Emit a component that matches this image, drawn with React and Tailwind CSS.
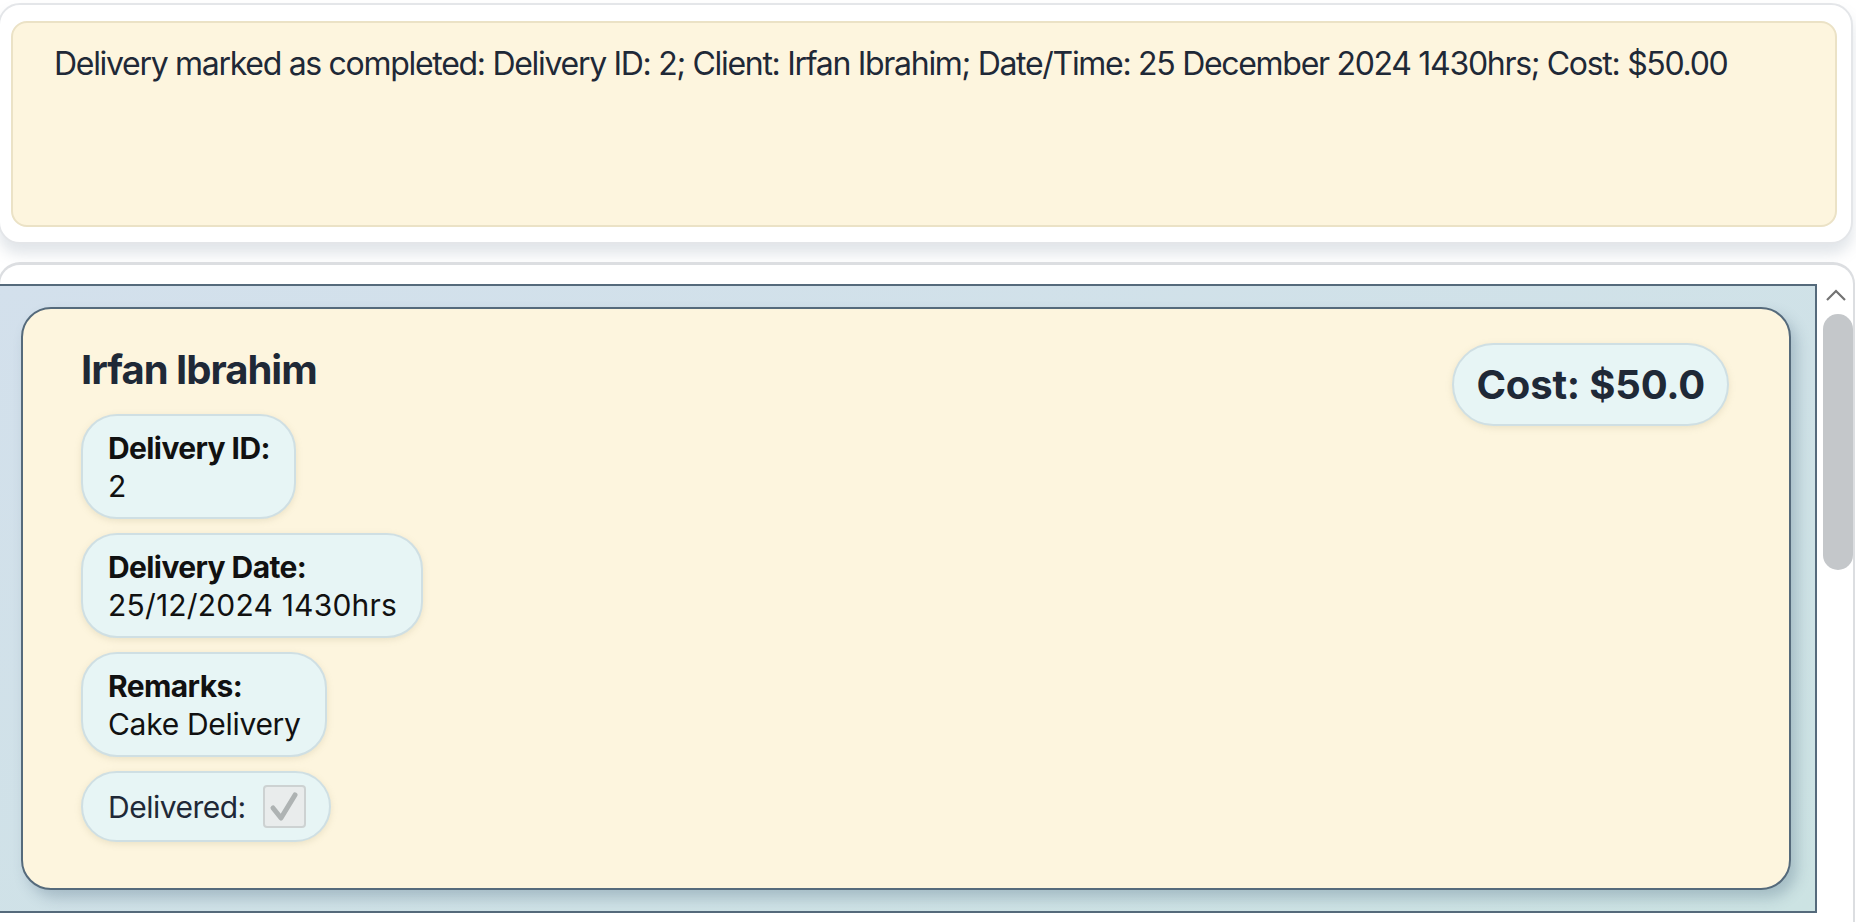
export default function App() {
  return (
    <div className="w-[1856px] h-[922px] bg-white overflow-hidden relative font-['Inter','Liberation_Sans',sans-serif]">
      {/* Result display panel */}
      <div className="mt-[3px] ml-[-2px] w-[1855px] h-[241px] rounded-[22px] bg-white border-2 border-[#e4e6e9] shadow-[0_10px_14px_rgba(120,135,155,0.22)] pt-[16px] pl-[11px] pr-[14px]">
        <div className="h-[206px] rounded-[16px] border-2 border-[#ebe2c6] bg-[#fdf5de] pl-[41px] pt-[21px]">
          <p className="text-[32px] leading-[40px] tracking-[-1.3px] text-[#1f2937] whitespace-nowrap">
            Delivery marked as completed: Delivery ID: 2; Client: Irfan Ibrahim; Date/Time: 25 December 2024 1430hrs; Cost: $50.00
          </p>
        </div>
      </div>

      {/* List panel */}
      <div className="mt-[18px] ml-[-2px] w-[1857px] h-[700px] rounded-t-[22px] bg-white border-t-[3px] border-x-2 border-[#dcdee1] pt-[19px] flex">
        <div className="ml-[-2px] w-[1819px] h-[629px] border-2 border-[#556a7b] bg-gradient-to-br from-[#d3e0ec] to-[#cce3e3] pt-[21px] pb-[21px] pl-[21px] pr-[24px]">
          <div className="h-[583px] rounded-[30px] border-2 border-[#556a7b] bg-[#fdf5de] shadow-[6px_8px_14px_rgba(80,110,130,0.32)] pt-[34px] pl-[58px] pr-[60px] flex justify-between items-start">
            <div className="flex flex-col items-start">
              <h1 className="mt-[3px] text-[40px] leading-[48px] font-bold tracking-[-1px] text-[#1f2937]">Irfan Ibrahim</h1>
              <div className="mt-[20px] flex flex-col items-start gap-[14px]">
                <Pill label="Delivery ID:" value="2" />
                <Pill label="Delivery Date:" value="25/12/2024 1430hrs" wide />
                <Pill label="Remarks:" value="Cake Delivery" />
                <div className="rounded-[36px] border-2 border-[#cfdfe3] bg-[#e7f5f5] shadow-[0_2px_6px_rgba(180,170,130,0.25)] pl-[25px] pr-[23px] py-[12px] flex items-center gap-[17px]">
                  <span className="text-[30px] leading-[38px] tracking-[-0.5px] text-[#1f2937]">Delivered:</span>
                  <div className="w-[43px] h-[43px] rounded-[4px] border-2 border-[#cdd2d2] bg-[#e9ecec] flex items-center justify-center">
                    <svg width="34" height="34" viewBox="0 0 34 34">
                      <path d="M6 18 L14 28 L28 5" fill="none" stroke="#aeb3b3" strokeWidth="5" strokeLinecap="round" strokeLinejoin="round" />
                    </svg>
                  </div>
                </div>
              </div>
            </div>
            <div className="rounded-[42px] border-2 border-[#cfdfe3] bg-[#e7f5f5] shadow-[0_2px_6px_rgba(180,170,130,0.25)] px-[22px] pt-[16px] pb-[15px]">
              <span className="text-[40px] leading-[48px] font-bold tracking-[-0.2px] text-[#1f2937] whitespace-nowrap">Cost: $50.0</span>
            </div>
          </div>
        </div>
        <div className="flex-1 flex flex-col items-center pt-[5px]">
          <svg width="22" height="13" viewBox="0 0 22 13" className="ml-[2px]">
            <path d="M2 11 L11 2 L20 11" fill="none" stroke="#737373" strokeWidth="2.2" />
          </svg>
          <div className="mt-[12px] ml-[6px] w-[30px] h-[256px] rounded-full bg-[#c4c7ca]" />
        </div>
      </div>
    </div>
  );
}

function Pill({ label, value, wide }) {
  return (
    <div className="rounded-[36px] border-2 border-[#cfdfe3] bg-[#e7f5f5] shadow-[0_2px_6px_rgba(180,170,130,0.25)] pl-[25px] pr-[24px] py-[12.5px] flex flex-col">
      <span className="text-[30px] leading-[38px] font-bold tracking-[-0.6px] text-[#111111] whitespace-nowrap">{label}</span>
      <span className={wide ? "text-[30px] leading-[38px] tracking-[0.2px] text-[#111111] whitespace-nowrap" : "text-[30px] leading-[38px] tracking-[-0.3px] text-[#111111] whitespace-nowrap"}>{value}</span>
    </div>
  );
}
